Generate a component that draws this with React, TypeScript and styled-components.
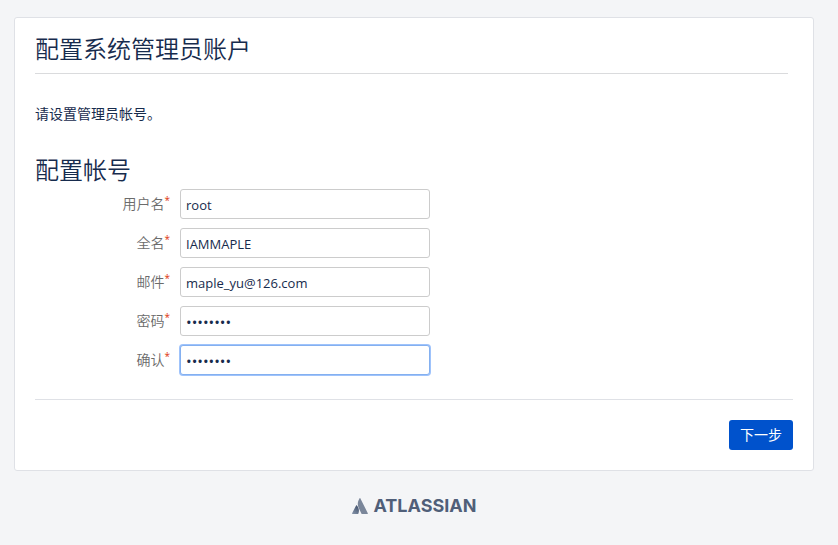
import React from "react";
import styled, { createGlobalStyle, css } from "styled-components";

const GlobalStyle = createGlobalStyle`
  *, *::before, *::after { box-sizing: border-box; }
  body {
    margin: 0;
    background: #f4f5f7;
    color: #172b4d;
    font: 14px/20px "Open Sans", "Noto Sans CJK SC", sans-serif;
  }
`;

const Page = styled.div`
  padding: 17px 24px 24px 14px;
`;

const Panel = styled.main`
  padding: 16px 20px 20px;
  background: #fff;
  border: 1px solid #dfe1e6;
  border-radius: 3px;
`;

const PanelHeader = styled.header`
  margin-right: 5px;
  padding-bottom: 9px;
  border-bottom: 1px solid #dadbdd;
`;

const Title = styled.h1`
  margin: 0;
  font-size: 24px;
  line-height: 30px;
  font-weight: 350;
`;

const Intro = styled.p`
  margin: 30px 0 0;
`;

const SectionTitle = styled.h2`
  margin: 31px 0 4px;
  font-size: 24px;
  line-height: 30px;
  font-weight: 350;
`;

const Fields = styled.div`
  display: grid;
  gap: 9px;
`;

const FieldRow = styled.div`
  display: grid;
  grid-template-columns: 135px minmax(0, 250px);
  column-gap: 10px;
`;

const Label = styled.label`
  display: flex;
  justify-content: flex-end;
  padding-top: 5px;
  color: #6b6b6b;
  font-weight: 350;
`;

const Required = styled.span`
  color: #de350b;
  font-size: 10px;
  line-height: 12px;
  font-weight: 400;
`;

const TextInput = styled.input<{ $active?: boolean }>`
  width: 100%;
  height: 30px;
  padding: 2px 5px 0;
  border: 1px solid #ccc;
  border-radius: 3px;
  outline: none;
  background: #fff;
  color: #172b4d;
  font: 13px/20px "Open Sans", "Noto Sans CJK SC", sans-serif;
  &[type="password"] {
    font-size: 15px;
  }
  ${({ $active }) =>
    $active &&
    css`
      border-color: #84b0f0;
      box-shadow: 0 0 0 1px #9fc3fb;
    `}
`;

const Actions = styled.div`
  display: flex;
  justify-content: flex-end;
  margin-top: 24px;
  padding-top: 20px;
  border-top: 1px solid #dfe1e6;
`;

const PrimaryButton = styled.button`
  height: 30px;
  padding: 0 11px;
  border: 0;
  border-radius: 3px;
  background: #0052cc;
  color: #fff;
  font: 14px/30px "Open Sans", "Noto Sans CJK SC", sans-serif;
`;

const Footer = styled.footer`
  display: flex;
  justify-content: center;
  margin-top: 23px;
`;

const Brand = styled.a`
  display: flex;
  align-items: center;
  gap: 6px;
  color: #505f79;
  font: 700 18px/24px Inter, sans-serif;
  text-decoration: none;
`;

const fields = [
  { id: "username", label: "用户名", type: "text", value: "root" },
  { id: "fullname", label: "全名", type: "text", value: "IAMMAPLE" },
  { id: "email", label: "邮件", type: "text", value: "maple_yu@126.com" },
  { id: "password", label: "密码", type: "password", value: "password" },
  { id: "confirm", label: "确认", type: "password", value: "password", active: true },
];

function AtlassianMark() {
  return (
    <svg width="16" height="16" viewBox="0 0 16 16" aria-hidden="true">
      <defs>
        <linearGradient id="mark" x1="0.8" y1="0.1" x2="0.2" y2="1">
          <stop offset="0" stopColor="#44546f" />
          <stop offset="1" stopColor="#8290a6" />
        </linearGradient>
      </defs>
      <path d="M4.900 7.400c-.2-.3-.6-.3-.8.1L.1 15.200c-.2.4 0 .8.4.8h5.300c.2 0 .4-.1.5-.3 1.200-2.400.7-6-1.400-8.300z" fill="url(#mark)" />
      <path d="M7.500.4C5.400 3.800 5.300 7.200 6.700 10l2.800 5.700c.1.200.3.300.5.300h5.300c.4 0 .6-.4.500-.8L8.400.4C8.200 0 7.700 0 7.500.4z" fill="#7a869a" />
    </svg>
  );
}

export default function App() {
  return (
    <Page>
      <GlobalStyle />
      <Panel>
        <PanelHeader>
          <Title>配置系统管理员账户</Title>
        </PanelHeader>
        <Intro>请设置管理员帐号。</Intro>
        <form onSubmit={(e) => e.preventDefault()}>
          <SectionTitle>配置帐号</SectionTitle>
          <Fields>
            {fields.map((f) => (
              <FieldRow key={f.id}>
                <Label htmlFor={f.id}>
                  {f.label}
                  <Required>*</Required>
                </Label>
                <TextInput id={f.id} name={f.id} type={f.type} defaultValue={f.value} $active={f.active} />
              </FieldRow>
            ))}
          </Fields>
          <Actions>
            <PrimaryButton type="submit">下一步</PrimaryButton>
          </Actions>
        </form>
      </Panel>
      <Footer>
        <Brand href="#">
          <AtlassianMark />
          ATLASSIAN
        </Brand>
      </Footer>
    </Page>
  );
}
